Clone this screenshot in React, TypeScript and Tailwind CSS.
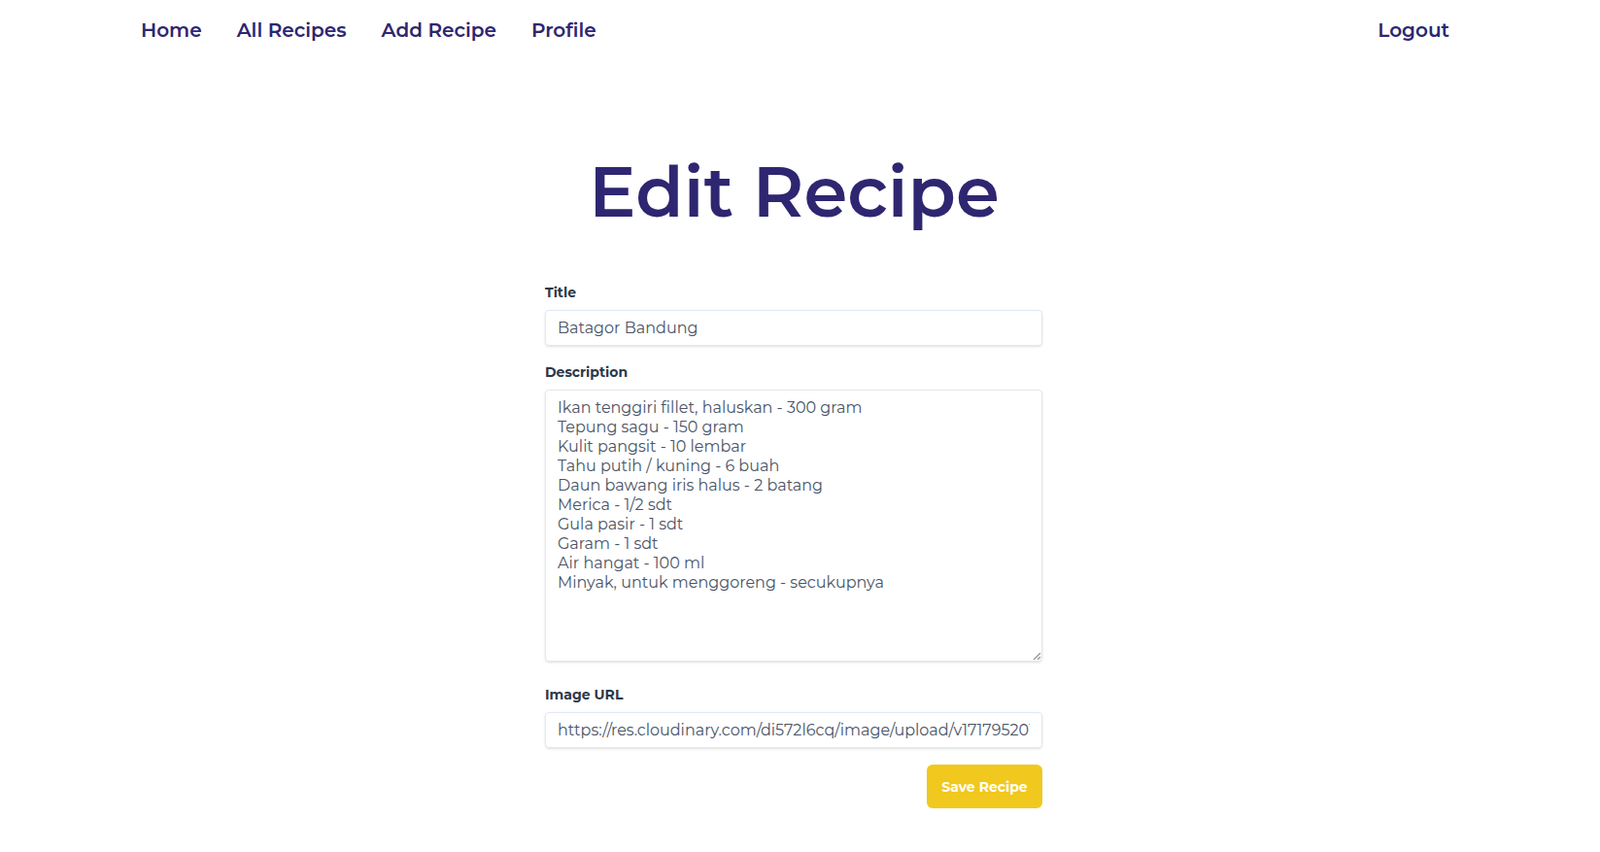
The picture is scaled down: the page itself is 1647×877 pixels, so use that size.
import React from "react";

const desc = `Ikan tenggiri fillet, haluskan - 300 gram
Tepung sagu - 150 gram
Kulit pangsit - 10 lembar
Tahu putih / kuning - 6 buah
Daun bawang iris halus - 2 batang
Merica - 1/2 sdt
Gula pasir - 1 sdt
Garam - 1 sdt
Air hangat - 100 ml
Minyak, untuk menggoreng - secukupnya`;

export default function App() {
  return (
    <div
      className="min-h-screen bg-white"
      style={{ fontFamily: "Montserrat, Inter, 'Noto Sans', sans-serif" }}
    >
      <nav className="flex h-[62px] items-center justify-between pl-[145px] pr-[155px] text-[20px] font-semibold text-[#2e2670]">
        <div className="flex gap-[36px]">
          <a>Home</a>
          <a>All Recipes</a>
          <a>Add Recipe</a>
          <a>Profile</a>
        </div>
        <a>Logout</a>
      </nav>
      <main className="flex flex-col items-center pr-[12px]">
        <h1 className="mt-[99px] text-[72px] leading-none font-semibold text-[#2e2670]">
          Edit Recipe
        </h1>
        <form className="mt-[58px] mr-[1px] w-[512px]">
          <label className="mb-2 block text-sm font-bold text-[#2d3748]">Title</label>
          <input
            className="block h-[37px] w-full appearance-none rounded border border-[#e2e8f0] px-3 text-base text-[#4a5568] shadow outline-none"
            defaultValue="Batagor Bandung"
          />
          <label className="mt-[17px] mb-2 block text-sm font-bold text-[#2d3748]">Description</label>
          <textarea
            rows={13}
            className="block h-[280px] w-full appearance-none rounded border border-[#e2e8f0] px-3 py-2 text-base leading-5 text-[#4a5568] shadow outline-none"
            defaultValue={desc}
          />
          <label className="mt-[24px] mb-2 block text-sm font-bold text-[#2d3748]">Image URL</label>
          <input
            className="block h-[37px] w-full appearance-none rounded border border-[#e2e8f0] px-3 text-base text-[#4a5568] shadow outline-none"
            defaultValue="https://res.cloudinary.com/di572l6cq/image/upload/v1717952018/batagor.jpg"
          />
          <div className="mt-[17px] flex justify-end">
            <button
              type="button"
              className="h-[45px] w-[119px] rounded-md bg-[#f0c81e] text-sm font-bold text-white"
            >
              Save Recipe
            </button>
          </div>
        </form>
      </main>
    </div>
  );
}
